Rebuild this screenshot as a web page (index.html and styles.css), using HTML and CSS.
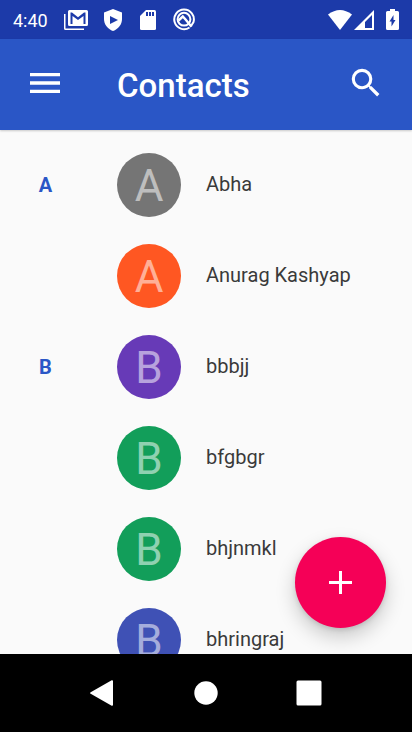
FILE: index.html
```html
<!DOCTYPE html>
<html lang="en">
<head>
<meta charset="utf-8">
<meta name="viewport" content="width=device-width, initial-scale=1">
<title>Contacts</title>
<link rel="stylesheet" href="styles.css">
</head>
<body>
<div class="status">
  <time class="clock">4:40</time>
  <div class="notifications">
    <svg width="24" height="20" viewBox="0 0 24 20" fill="#fff"><path d="M0 4h1.500v14.500H20V20H1.500Q0 20 0 18.500z"/><path fill-rule="evenodd" d="M5.500 0H22.500Q24 0 24 1.500V14.500Q24 16 22.500 16H5.500Q4 16 4 14.500V1.500Q4 0 5.500 0zM6.500 2.500V14h2V6l5.500 4 5.500-4v8h2V2.500h-1.500L14 7.200 8 2.500z"/></svg>
    <svg width="18" height="22" viewBox="0 0 18 22"><path fill="#fff" d="M9 0l9 3.500V10c0 5.500-3.700 10-9 12-5.300-2-9-6.500-9-12V3.500z"/><path fill="#1c3aa9" d="M6 7v8l8-4z"/></svg>
    <svg class="card" width="16" height="20" viewBox="0 0 16 20"><path fill="#fff" d="M6 0h8.500Q16 0 16 1.500v17q0 1.500-1.500 1.500h-13Q0 20 0 18.500V6z"/><path fill="#1c3aa9" d="M6 2h2v4H6zM9 2h2v4H9zM12 2h2v4h-2z"/></svg>
    <svg width="22" height="23" viewBox="0 0 22 23" fill="none" stroke="#fff"><path stroke-width="2" d="M16.500 19.500A9.800 9.800 0 1 1 20.500 14L18 18"/><circle cx="11" cy="11.200" r="6.400" stroke-width="2"/><path stroke-width="2.400" d="M5.500 12.500l4.300-4 3 3.300 5.700 7"/></svg>
  </div>
  <div class="system">
    <svg width="24" height="20" viewBox="0 0 24 20"><path fill="#fff" d="M0 4.500Q12-4.500 24 4.500L12 20z"/></svg>
    <svg width="20" height="20" viewBox="0 0 20 20"><path fill="#fff" fill-rule="evenodd" d="M20 0v20H0zM18 5l-7 7v6h7z"/></svg>
    <svg class="battery" width="13" height="21" viewBox="0 0 13 21"><path fill="#fff" d="M4 0h5v2h2.500Q13 2 13 3.500v16q0 1.500-1.500 1.500h-10Q0 21 0 19.500v-16Q0 2 1.500 2H4z"/><path fill="#1c3aa9" d="M7.500 6v5h2l-4 6.500v-5h-2z"/></svg>
  </div>
</div>
<header class="bar">
  <button class="icon-button" aria-label="Open menu"><svg width="40" height="40" viewBox="0 0 24 24" fill="#fff"><path d="M3 18h18v-2H3v2zm0-5h18v-2H3v2zm0-7v2h18V6H3z"/></svg></button>
  <h1 class="title">Contacts</h1>
  <button class="icon-button" aria-label="Search"><svg width="38" height="38" viewBox="0 0 24 24" fill="#fff"><path d="M15.500 14h-.79l-.28-.27A6.471 6.471 0 0 0 16 9.500 6.500 6.500 0 1 0 9.500 16c1.610 0 3.090-.59 4.230-1.570l.27.28v.79l5 4.990L20.490 19l-4.990-5zm-6 0C7.010 14 5 11.990 5 9.500S7.010 5 9.500 5 14 7.010 14 9.500 11.990 14 9.500 14z"/></svg></button>
</header>
<main class="content">
  <ul class="list">
    <li class="row"><span class="index">A</span><span class="avatar gray">A</span><span class="name">Abha</span></li>
    <li class="row"><span class="index"></span><span class="avatar orange">A</span><span class="name">Anurag Kashyap</span></li>
    <li class="row"><span class="index">B</span><span class="avatar purple">B</span><span class="name">bbbjj</span></li>
    <li class="row"><span class="index"></span><span class="avatar green">B</span><span class="name">bfgbgr</span></li>
    <li class="row"><span class="index"></span><span class="avatar green">B</span><span class="name">bhjnmkl</span></li>
    <li class="row"><span class="index"></span><span class="avatar indigo">B</span><span class="name">bhringraj</span></li>
  </ul>
  <button class="fab" aria-label="Create contact"><svg width="23" height="23" viewBox="0 0 23 23" fill="#fff"><path d="M10 0h3v10h10v3H13v10h-3V13H0v-3h10z"/></svg></button>
</main>
<nav class="nav">
  <button class="nav-button" aria-label="Back"><svg width="26" height="26" viewBox="0 0 26 26"><path fill="#fff" d="M.7 12.200L21.700.2Q23 0 23 1v24q0 1-1.300.8L.7 13.800q-1.300-.8 0-1.600z"/></svg></button>
  <button class="nav-button" aria-label="Home"><svg width="24" height="24" viewBox="0 0 24 24"><circle cx="12" cy="12" r="11.700" fill="#fff"/></svg></button>
  <button class="nav-button" aria-label="Recent apps"><svg width="26" height="26" viewBox="0 0 26 26"><rect x=".5" y=".5" width="25" height="25" rx="1.500" fill="#fff"/></svg></button>
</nav>
</body>
</html>
```
FILE: styles.css
```css
* { box-sizing: border-box; }

body {
  margin: 0;
  height: 100vh;
  display: flex;
  flex-direction: column;
  background: #fafafa;
  font-family: Roboto, "Liberation Sans", sans-serif;
}

button {
  display: flex;
  align-items: center;
  justify-content: center;
  padding: 0;
  border: 0;
  background: none;
}

svg { display: block; }

.status {
  flex: none;
  display: flex;
  align-items: center;
  height: 39px;
  padding: 0 13px;
  background: #1c3aa9;
  color: #fff;
}

.clock {
  width: 51px;
  font-size: 18px;
  line-height: 24px;
  padding-top: 2px;
}

.notifications {
  display: flex;
  align-items: center;
  gap: 16px;
}

.card { margin: 0 1px 0 2px; }

.system {
  display: flex;
  align-items: center;
  gap: 2px;
  margin-left: auto;
}

.battery { margin-left: 10px; }

.bar {
  position: relative;
  z-index: 1;
  flex: none;
  display: flex;
  align-items: center;
  height: 91px;
  padding: 0 27px 4px 25px;
  background: #2a56c6;
  box-shadow: 0 1px 2px rgba(0, 0, 0, 0.2);
}

.icon-button { flex: none; }

.title {
  flex: 1;
  margin: 0;
  padding: 6px 0 0 52px;
  color: #fff;
  font-size: 33px;
  font-weight: 500;
  line-height: 40px;
}

.content {
  position: relative;
  flex: 1;
  min-height: 0;
  overflow: hidden;
}

.list {
  margin: 0;
  padding: 10px 0 0;
  list-style: none;
}

.row {
  display: flex;
  align-items: center;
  padding: 13px 0 14px;
}

.index {
  width: 91px;
  margin-right: 26px;
  color: #2a56c6;
  font-size: 20px;
  font-weight: 700;
  text-align: center;
}

.avatar {
  display: flex;
  align-items: center;
  justify-content: center;
  width: 64px;
  height: 64px;
  margin-right: 25px;
  padding-top: 2px;
  border-radius: 50%;
  color: rgba(255, 255, 255, 0.54);
  font-size: 44px;
  line-height: 62px;
}

.gray { background: #757575; }
.orange { background: #ff5722; }
.purple { background: #673ab7; }
.green { background: #129e5a; }
.indigo { background: #3f51b5; }

.name {
  padding-bottom: 2px;
  color: #3a3a3a;
  font-size: 20px;
  line-height: 24px;
}

.fab {
  position: absolute;
  right: 26px;
  bottom: 26px;
  width: 91px;
  height: 91px;
  border-radius: 50%;
  background: #f50057;
  box-shadow: 0 9px 20px rgba(0, 0, 0, 0.2), 0 2px 5px rgba(0, 0, 0, 0.12);
}

.nav {
  flex: none;
  display: flex;
  justify-content: center;
  height: 78px;
  background: #000;
}

.nav-button { width: 25%; }
```
